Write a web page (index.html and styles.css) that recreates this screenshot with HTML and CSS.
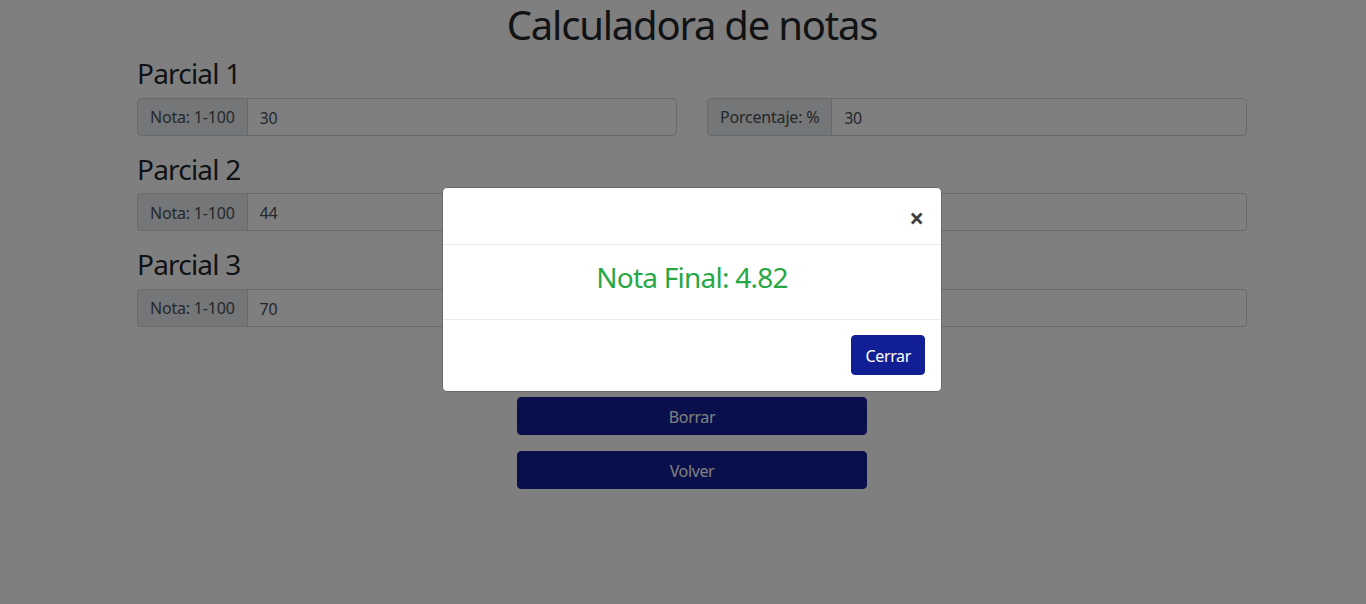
FILE: index.html
```html
<!DOCTYPE html>
<html lang="es">
<head>
<meta charset="utf-8">
<title>Calculadora de notas</title>
<link rel="stylesheet" href="styles.css">
</head>
<body>
<div class="page">
  <main class="container">
    <h1 class="title">Calculadora de notas</h1>

    <section class="parcial">
      <h3 class="parcial-title">Parcial 1</h3>
      <div class="row">
        <div class="group"><span class="addon">Nota: 1-100</span><input class="field" type="text" value="30"></div>
        <div class="group"><span class="addon">Porcentaje: %</span><input class="field" type="text" value="30"></div>
      </div>
    </section>

    <section class="parcial">
      <h3 class="parcial-title">Parcial 2</h3>
      <div class="row">
        <div class="group"><span class="addon">Nota: 1-100</span><input class="field" type="text" value="44"></div>
        <div class="group"><span class="addon">Porcentaje: %</span><input class="field" type="text" value="30"></div>
      </div>
    </section>

    <section class="parcial">
      <h3 class="parcial-title">Parcial 3</h3>
      <div class="row">
        <div class="group"><span class="addon">Nota: 1-100</span><input class="field" type="text" value="70"></div>
        <div class="group"><span class="addon">Porcentaje: %</span><input class="field" type="text" value="40"></div>
      </div>
    </section>

    <div class="actions">
      <button class="btn btn-block" type="button">Calcular</button>
      <button class="btn btn-block" type="button">Borrar</button>
      <button class="btn btn-block" type="button">Volver</button>
    </div>
  </main>
</div>

<div class="backdrop"></div>

<div class="modal">
  <div class="modal-dialog">
    <div class="modal-header">
      <button class="close" type="button" aria-label="Close">&times;</button>
    </div>
    <div class="modal-body">
      <h3 class="result">Nota Final: 4.82</h3>
    </div>
    <div class="modal-footer">
      <button class="btn btn-modal" type="button">Cerrar</button>
    </div>
  </div>
</div>
</body>
</html>
```

FILE: styles.css
```css
* { box-sizing: border-box; }

html, body {
  margin: 0;
  padding: 0;
}

body {
  font-family: "Segoe UI", "Noto Sans", "Open Sans", sans-serif;
  font-size: 16px;
  line-height: 1.5;
  letter-spacing: -0.35px;
  color: #212529;
  background: #fff;
  height: 604px;
  overflow: hidden;
}

.page {
  padding-left: 18px;
}

.container {
  width: 1110px;
  margin: 0 auto;
}

.title {
  margin: 0 0 8px;
  padding-top: 2px;
  height: 48px;
  font-size: 40px;
  font-weight: 400;
  line-height: 46px;
  letter-spacing: -1.2px;
  text-align: center;
}

.parcial {
  margin-bottom: 16px;
}

.parcial-title {
  margin: 0 0 7px;
  padding-top: 1px;
  font-size: 28px;
  font-weight: 400;
  line-height: 1.2;
  letter-spacing: -0.8px;
}

.row {
  display: grid;
  grid-template-columns: 1fr 1fr;
  column-gap: 30px;
}

.group {
  display: flex;
  height: 38px;
}

.addon {
  display: flex;
  align-items: center;
  padding: 1px 12px 0;
  background: #e9ecef;
  border: 1px solid #ced4da;
  border-radius: 4px 0 0 4px;
  color: #495057;
  font-size: 16px;
  letter-spacing: -0.2px;
  white-space: nowrap;
}

.field {
  flex: 1;
  min-width: 0;
  margin-left: -1px;
  padding: 7px 12px 5px;
  border: 1px solid #ced4da;
  border-radius: 0 4px 4px 0;
  font-family: inherit;
  font-size: 16px;
  letter-spacing: inherit;
  color: #495057;
  background: #fff;
}

.actions {
  width: 350px;
  margin: 0 auto;
  display: flex;
  flex-direction: column;
  gap: 16px;
}

.btn {
  display: block;
  height: 38px;
  padding: 7px 12px 5px;
  border: 1px solid #121f94;
  border-radius: 4px;
  background: #121f94;
  color: #fff;
  font-family: inherit;
  font-size: 16px;
  letter-spacing: inherit;
  line-height: 1.5;
  text-align: center;
}

.btn-block { width: 100%; }

.backdrop {
  position: fixed;
  inset: 0;
  background: rgba(0, 0, 0, 0.5);
}

.modal {
  position: fixed;
  inset: 0;
  padding-left: 18px;
}

.modal-dialog {
  width: 500px;
  margin: 187px auto 0;
  background: #fff;
  border: 1px solid #6a6a6a;
  border-radius: 5px;
}

.modal-header {
  display: flex;
  justify-content: flex-end;
  height: 57px;
  padding: 16px;
  border-bottom: 1px solid #e9ecef;
}

.close {
  padding: 0;
  margin: 1px 1px 0 0;
  border: 0;
  background: transparent;
  font-family: inherit;
  font-size: 26px;
  font-weight: 700;
  line-height: 1;
  color: #000;
  opacity: 0.75;
  height: 26px;
}

.modal-body {
  padding: 16px;
}

.result {
  margin: 0 0 8px;
  font-size: 28px;
  font-weight: 400;
  line-height: 1.2;
  letter-spacing: -0.75px;
  color: #28a745;
  text-align: center;
}

.modal-footer {
  display: flex;
  justify-content: flex-end;
  padding: 11px 12px 12px;
  border-top: 1px solid #e9ecef;
}

.btn-modal {
  margin: 4px;
  height: 40px;
  padding: 8px 13px 6px;
}
```
